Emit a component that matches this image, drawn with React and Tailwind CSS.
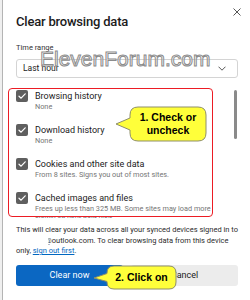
import React from "react";

const items = [
  { label: "Browsing history", sub: "None" },
  { label: "Download history", sub: "None" },
  { label: "Cookies and other site data", sub: "From 8 sites. Signs you out of most sites." },
  {
    label: "Cached images and files",
    sub: "Frees up less than 325 MB. Some sites may load more slowly on your next visit.",
  },
];

const CheckBox = () => (
  <div className="w-[12px] h-[12px] shrink-0 rounded-[2px] bg-[#5f5f5f] flex items-center justify-center">
    <svg width="10" height="10" viewBox="0 0 10 10">
      <path d="M2 5.2 L4.1 7.2 L8.2 2.8" fill="none" stroke="#fff" strokeWidth="1.2" strokeLinecap="round" strokeLinejoin="round" />
    </svg>
  </div>
);

// yellow annotation bubble with a pointer on the left
const Bubble = ({ w, h, d, children, className }) => (
  <div className={`absolute ${className}`} style={{ width: w, height: h }}>
    <svg width={w} height={h} className="absolute inset-0 overflow-visible">
      <path d={d} fill="#ffff3a" stroke="#8f8f6a" strokeWidth="1" />
    </svg>
    {children}
  </div>
);

export default function App() {
  return (
    <div className="relative w-[250px] h-[300px] overflow-hidden bg-white flex font-['Roboto',sans-serif] text-[#1b1b1b]">
      <div className="w-[2px] bg-[#efefef]" />
      <div className="w-px bg-[#b4b4b4]" />

      <div className="relative flex-1 pl-[13px] pr-[12px] bg-white">
        {/* close */}
        <svg className="absolute top-[8px] right-[9px]" width="8" height="8" viewBox="0 0 8 8">
          <path d="M0.5 0.5 L7.5 7.5 M7.5 0.5 L0.5 7.5" stroke="#444" strokeWidth="0.9" />
        </svg>

        <div className="pt-[14px] text-[13px] leading-[16px] font-medium tracking-[-0.2px]">
          Clear browsing data
        </div>

        <div className="mt-[13px] text-[7.5px] leading-[10px] text-[#333]">Time range</div>

        <div className="mt-[6px] h-[19px] border border-[#d4d4d4] rounded-[3px] flex items-center justify-between pl-[6px] pr-[11px]">
          <span className="text-[8.5px]">Last hour</span>
          <svg width="8" height="5" viewBox="0 0 8 5">
            <path d="M0.5 0.7 L4 4.2 L7.5 0.7" fill="none" stroke="#444" strokeWidth="0.9" />
          </svg>
        </div>

        {/* scrolling list */}
        <div className="mt-[10px] h-[130px] flex">
          <div className="w-[197px] h-full overflow-hidden pt-[2px]">
            {items.map((it) => (
              <div key={it.label} className="h-[34px] flex gap-[7px]">
                <CheckBox />
                <div className="min-w-0">
                  <div className="text-[9px] leading-[12px] whitespace-nowrap">{it.label}</div>
                  <div className="text-[7.3px] leading-[10px] text-[#767676]">{it.sub}</div>
                </div>
              </div>
            ))}
          </div>
          <div className="ml-auto mr-[1px] mt-[2px] w-[3.5px] h-[49px] rounded-full bg-[#8a8a8a]" />
        </div>

        <div className="mt-[7px] text-[7.5px] leading-[10.5px] text-[#2b2b2b] whitespace-nowrap">
          <div>This will clear your data across all your synced devices signed in to</div>
          <div className="flex">
            <span className="w-[29px] shrink-0" />
            <span className="[clip-path:inset(0_0_0_50%)]">@</span>
            <span>outlook.com. To clear browsing data from this device</span>
          </div>
          <div>
            only, <span className="text-[#0067c0] underline">sign out first</span>.
          </div>
        </div>

        <div className="mt-[8.5px] flex gap-[8px]">
          <div className="flex-1 h-[21px] rounded-[3px] bg-[#0b67c2] text-white text-[9px] flex items-center justify-center">
            Clear now
          </div>
          <div className="flex-1 h-[21px] rounded-[3px] bg-[#ececec] text-[9px] flex items-center justify-center">
            Cancel
          </div>
        </div>
      </div>

      {/* watermark */}
      <div className="absolute left-[40px] top-[48px] text-[21px] leading-[21px] font-['Liberation_Sans',Arial,sans-serif] text-white/50 [-webkit-text-stroke:1px_#8c8c8c] whitespace-nowrap">
        ElevenForum.com
      </div>

      {/* annotation frame */}
      <div className="absolute left-[8px] top-[88px] w-[205px] h-[129px] rounded-[4px] border-[1.5px] border-[#ec1c24]" />

      <Bubble
        w={95}
        h={39}
        className="left-[114px] top-[105px]"
        d="M24 2 H84 Q92 2 92 10 V28 Q92 36 84 36 H24 Q16 36 16 28 V25 L2 19 L16 13 V10 Q16 2 24 2 Z"
      >
        <div className="absolute left-[16px] top-[2px] w-[76px] h-[34px] flex flex-col items-center justify-center text-[10.5px] leading-[13px] font-bold font-['Liberation_Sans',Arial,sans-serif] text-black">
          <span>1. Check or</span>
          <span>uncheck</span>
        </div>
      </Bubble>

      <Bubble
        w={87}
        h={28}
        className="left-[92px] top-[264px]"
        d="M22 2 H77 Q84 2 84 9 V18 Q84 25 77 25 H22 Q15 25 15 18 V17.5 L2 14 L15 9.5 V9 Q15 2 22 2 Z"
      >
        <div className="absolute left-[15px] top-[2px] w-[69px] h-[23px] flex items-center justify-center text-[10.5px] font-bold font-['Liberation_Sans',Arial,sans-serif] text-black">
          2. Click on
        </div>
      </Bubble>
    </div>
  );
}
